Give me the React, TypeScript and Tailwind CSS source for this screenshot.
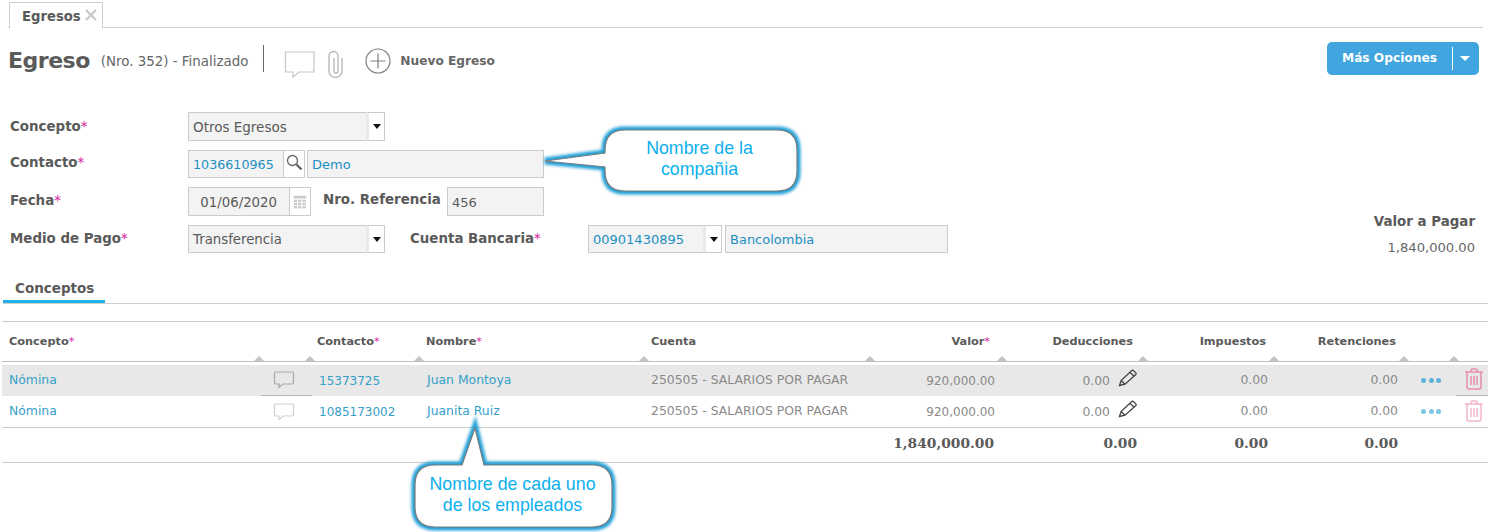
import React from "react";

const FONT = "font-['DejaVu_Sans',sans-serif]";
const GRID = "grid grid-cols-[259px_51px_109px_225px_226px_132px_141px_131px_130px_50px_32px]";

function Star() {
  return <span className="text-[#d6249f] font-normal">*</span>;
}

function Bubble({ className, width, height, path, lines, textClass }: { className: string; width: number; height: number; path: string; lines: string[]; textClass: string }) {
  return (
    <div className={`absolute ${className}`} style={{ width, height }}>
      <svg width={width} height={height} className="absolute left-0 top-0 overflow-visible">
        <path d={path} fill="none" stroke="#1f9fd6" strokeWidth="7" className="blur-[1.5px]" />
        <path d={path} fill="#fff" stroke="#7c7c7c" strokeWidth="1.2" />
      </svg>
      <div className={`absolute font-['Liberation_Sans',sans-serif] text-[#0cb0ee] text-[17.8px] leading-[21px] text-center ${textClass}`}>
        {lines.map((l) => (
          <div key={l}>{l}</div>
        ))}
      </div>
    </div>
  );
}

function Field({ className, children }: { className: string; children?: React.ReactNode }) {
  return (
    <div className={`border border-[#cbcbcb] bg-[#f3f3f3] flex items-center px-1 pt-[2px] ${className}`}>{children}</div>
  );
}

function Caret() {
  return (
    <div className="bg-white border border-[#cbcbcb] border-l-[3px] border-l-[#e9e9e9] flex items-center justify-center h-full w-[19px] shrink-0">
      <div className="w-0 h-0 border-x-[4px] border-x-transparent border-t-[5px] border-t-[#111]" />
    </div>
  );
}

function Comment({ dark }: { dark?: boolean }) {
  return (
    <svg width="22" height="18" viewBox="0 0 22 18" fill="none" stroke={dark ? "#a9a9a9" : "#cfcfcf"} strokeWidth="1.2">
      <path d="M3 1h16a1.5 1.5 0 0 1 1.5 1.5v9A1.5 1.5 0 0 1 19 13h-9l-4 3.5V13H3a1.5 1.5 0 0 1-1.5-1.5v-9A1.5 1.5 0 0 1 3 1z" />
    </svg>
  );
}

function Pencil() {
  return (
    <svg width="20" height="18" viewBox="0 0 20 18" fill="none" stroke="#444" strokeWidth="1.3" className="ml-[8px] -mt-[5px]">
      <path d="M1.5 16.5l1.6-5L13.5 1.8a1.5 1.5 0 0 1 2.1 0l2 1.8a1.5 1.5 0 0 1 0 2.1L7 15.2z" />
      <path d="M3.1 11.5L7 15.2M12 3.4l4 3.6" />
    </svg>
  );
}

function Trash({ dark }: { dark?: boolean }) {
  const c = dark ? "#e58fa6" : "#f5b5c6";
  return (
    <svg width="20" height="22" viewBox="0 0 20 22" fill="none" stroke={c} strokeWidth="1.5">
      <path d="M1 4h18M7 4V2a1 1 0 0 1 1-1h4a1 1 0 0 1 1 1v2" />
      <path d="M3 4v15a2 2 0 0 0 2 2h10a2 2 0 0 0 2-2V4" />
      <path d="M7 8v9M10 8v9M13 8v9" />
    </svg>
  );
}

function Dots({ dark }: { dark?: boolean }) {
  const c = dark ? "bg-[#5db3d8]" : "bg-[#7cc5e3]";
  return (
    <div className="flex gap-[2.5px] ml-[15px]">
      <span className={`w-[5px] h-[5px] rounded-full ${c}`} />
      <span className={`w-[5px] h-[5px] rounded-full ${c}`} />
      <span className={`w-[5px] h-[5px] rounded-full ${c}`} />
    </div>
  );
}

function HeadCell({ children, className = "" }: { children?: React.ReactNode; className?: string }) {
  return (
    <div className={`relative flex items-center h-full pt-[2px] font-bold text-[11.3px] text-[#5a5a5a] ${className}`}>
      {children}
      <span className="absolute right-[-3px] bottom-0 w-0 h-0 border-x-[5px] border-x-transparent border-b-[5px] border-b-[#c4c4c4]" />
    </div>
  );
}

function DataRow({ contact, name, shaded }: { contact: string; name: string; shaded?: boolean }) {
  const muted = "text-[#8a8a8a]";
  return (
    <div className={`${GRID} h-[31px] items-center text-[12.4px] ${shaded ? "bg-[#e8e8e8]" : ""}`}>
      <div className="pl-[7px] text-[#35a0c9]">Nómina</div>
      <div className={`flex justify-start items-center h-full pl-[12px] ${shaded ? "border-b border-[#b5b5b5]" : ""}`}>
        <Comment dark={shaded} />
      </div>
      <div className="pl-[7px] text-[12px] text-[#35a0c9]">{contact}</div>
      <div className="pl-[6px] text-[#35a0c9]">{name}</div>
      <div className={`pl-[5px] ${muted}`}>250505 - SALARIOS POR PAGAR</div>
      <div className={`text-right pr-[9px] text-[12px] ${muted}`}>920,000.00</div>
      <div className={`flex justify-end items-center pr-[7px] ${muted}`}>
        <span className="mt-[2px]">0.00</span>
        <Pencil />
      </div>
      <div className={`text-right pr-[8px] ${muted}`}>0.00</div>
      <div className={`text-right pr-[8px] ${muted}`}>0.00</div>
      <div className="flex items-center"><Dots dark={shaded} /></div>
      <div className={`flex items-center justify-center h-full pl-[4px] pb-[2px] ${shaded ? "border-b border-[#b5b5b5]" : ""}`}>
        <Trash dark={shaded} />
      </div>
    </div>
  );
}

export default function App() {
  const label = "font-bold text-[13.4px] text-[#5a5a5a]";
  const link = "text-[#1b8fc2]";
  return (
    <div className={`relative w-[1497px] h-[532px] overflow-hidden bg-white text-[#5a5a5a] ${FONT}`}>
      {/* tab strip */}
      <div className="ml-[8px] mr-[14px] h-[28px] border-b border-[#cfcfcf] flex items-end">
        <div className="ml-px h-[26px] w-[94px] border border-b-0 border-[#cfcfcf] bg-white flex items-center pl-[12px] pt-[2px] gap-[4px] -mb-px">
          <span className="font-bold text-[13.2px] text-[#5a5a5a]">Egresos</span>
          <svg width="12" height="12" viewBox="0 0 12 12" stroke="#cacaca" strokeWidth="2.4" className="-mt-[3px]">
            <path d="M1 1l10 10M11 1L1 11" />
          </svg>
        </div>
      </div>

      {/* title row */}
      <div className="h-[66px] pl-[8px] pr-[18px] flex items-center">
        <div className="font-bold text-[22px] text-[#5a5a5a] leading-none tracking-[-0.5px]">Egreso</div>
        <div className="ml-[11px] mt-[2px] text-[13.4px] text-[#666]">(Nro. 352) - Finalizado</div>
        <div className="ml-[15px] w-px h-[27px] bg-[#666] -mt-[6px]" />
        <svg width="32" height="28" viewBox="0 0 32 28" fill="none" stroke="#c6c6c6" strokeWidth="1.2" className="ml-[20px] mt-[6px]">
          <path d="M1.5 2h28.5v20H15l-6 5v-5H1.5z" />
        </svg>
        <svg width="18" height="28" viewBox="0 0 18 28" fill="none" stroke="#b5b5b5" strokeWidth="1.3" className="ml-[11px] mt-[6px]">
          <path d="M15 8v13a6.5 6.5 0 0 1-13 0V6a4.5 4.5 0 0 1 9 0v15a2 2 0 0 1-4 0V8" />
        </svg>
        <svg width="26" height="26" viewBox="0 0 26 26" fill="none" stroke="#808080" strokeWidth="1.2" className="ml-[20px]">
          <circle cx="13" cy="13" r="12" />
          <path d="M13 5.5v15M5.5 13h15" />
        </svg>
        <div className="ml-[9px] font-bold text-[12.2px] text-[#666]">Nuevo Egreso</div>
        <div className="ml-auto w-[152px] h-[33px] -mt-[6px] rounded-[5px] bg-[#41a6e0] flex items-center text-white font-bold text-[12.2px]">
          <span className="pl-[15px] w-[125px]">Más Opciones</span>
          <span className="w-px h-[23px] bg-white" />
          <span className="ml-[7px] w-0 h-0 border-x-[5px] border-x-transparent border-t-[5px] border-t-white" />
        </div>
      </div>

      {/* form */}
      <div className="mt-[18px] pl-[10px] pr-[22px] flex items-end justify-between">
        <div className="flex flex-col">
          <div className="flex items-center h-[29px]">
            <div className={`w-[178px] ${label} mt-[2px]`}>Concepto<Star /></div>
            <div className="flex h-[29px] w-[197px]">
              <Field className="flex-1 border-r-0 text-[13.5px]">Otros Egresos</Field>
              <Caret />
            </div>
          </div>
          <div className="flex items-center h-[28px] mt-[9px]">
            <div className={`w-[178px] ${label} -mt-[1px]`}>Contacto<Star /></div>
            <div className="flex h-[28px]">
              <Field className={`w-[95px] border-r-0 text-[12.7px] ${link}`}>1036610965</Field>
              <div className="w-[22px] border border-[#cbcbcb] bg-white flex justify-center pt-[3px]">
                <svg width="17" height="17" viewBox="0 0 17 17" fill="none" stroke="#666" strokeWidth="1.3">
                  <circle cx="6.5" cy="6.5" r="5" />
                  <path d="M10.5 10.5l5 5" strokeWidth="2.4" />
                </svg>
              </div>
              <Field className={`ml-[2px] w-[237px] text-[13px] ${link}`}>Demo</Field>
            </div>
          </div>
          <div className="flex items-center h-[29px] mt-[9px]">
            <div className={`w-[178px] ${label} -mt-[1px]`}>Fecha<Star /></div>
            <div className="flex h-[29px]">
              <Field className="w-[101px] border-r-0 justify-end pr-[12px] text-[13.3px]">01/06/2020</Field>
              <div className="w-[22px] border border-[#cbcbcb] bg-white flex items-center justify-center">
                <svg width="14" height="14" viewBox="0 0 13 13" fill="#c9c9c9" stroke="#fff" strokeWidth="0.5">
                  <rect x="0.5" y="0.5" width="12" height="3" />
                  <rect x="0.5" y="4" width="3.6" height="2.6" /><rect x="4.5" y="4" width="3.6" height="2.6" /><rect x="8.5" y="4" width="3.6" height="2.6" />
                  <rect x="0.5" y="7" width="3.6" height="2.6" /><rect x="4.5" y="7" width="3.6" height="2.6" /><rect x="8.5" y="7" width="3.6" height="2.6" />
                  <rect x="0.5" y="10" width="3.6" height="2.6" /><rect x="4.5" y="10" width="3.6" height="2.6" /><rect x="8.5" y="10" width="3.6" height="2.6" />
                </svg>
              </div>
              <div className={`ml-[12px] w-[124px] ${label} flex items-center pb-[2px]`}>Nro. Referencia</div>
              <Field className="w-[97px] text-[13px]">456</Field>
            </div>
          </div>
          <div className="flex items-center h-[28px] mt-[9px]">
            <div className={`w-[178px] ${label}`}>Medio de Pago<Star /></div>
            <div className="flex h-[28px] w-[197px]">
              <Field className="flex-1 border-r-0 text-[13.3px]">Transferencia</Field>
              <Caret />
            </div>
            <div className={`ml-[25px] w-[178px] ${label}`}>Cuenta Bancaria<Star /></div>
            <div className="flex h-[28px]">
              <Field className={`w-[115px] border-r-0 text-[13px] ${link}`}>00901430895</Field>
              <Caret />
              <Field className={`ml-[3px] w-[223px] text-[13px] ${link}`}>Bancolombia</Field>
            </div>
          </div>
        </div>
        <div className="text-right mb-[-5px]">
          <div className="font-bold text-[13.4px] text-[#5a5a5a]">Valor a Pagar</div>
          <div className="mt-[6px] text-[13.1px] text-[#666]">1,840,000.00</div>
        </div>
      </div>

      {/* tabs */}
      <div className="mt-[24px] h-[27px] ml-[3px] w-[1485px] border-b border-[#cfcfcf]">
        <div className="w-[102px] h-[26px] border-b-[3px] border-[#1fb0e6] pl-[12px] font-bold text-[13.5px] text-[#5a5a5a] leading-[23px]">Conceptos</div>
      </div>

      {/* table */}
      <div className="mt-[17px] ml-[2px] w-[1486px] border-t border-[#c8c8c8]">
        <div className={`${GRID} h-[40px] border-b border-[#c0c0c0]`}>
          <HeadCell className="pl-[7px]">Concepto<Star /></HeadCell>
          <HeadCell />
          <HeadCell className="pl-[5px]">Contacto<Star /></HeadCell>
          <HeadCell className="pl-[5px]">Nombre<Star /></HeadCell>
          <HeadCell className="pl-[5px]">Cuenta</HeadCell>
          <HeadCell className="justify-end pr-[14px]">Valor<Star /></HeadCell>
          <HeadCell className="justify-end pr-[12px]">Deducciones</HeadCell>
          <HeadCell className="justify-end pr-[10px]">Impuestos</HeadCell>
          <HeadCell className="justify-end pr-[10px]">Retenciones</HeadCell>
          <HeadCell />
          <div />
        </div>
        <div className="pt-[3px]">
          <DataRow contact="15373725" name="Juan Montoya" shaded />
          <DataRow contact="1085173002" name="Juanita Ruiz" />
        </div>
        <div className={`${GRID} h-[36px] border-y border-[#cdcdcd] items-center font-['DejaVu_Serif',serif] font-bold text-[13.8px] text-[#5a5a5a] pb-[3px]`}>
          <div className="col-span-5" />
          <div className="text-right pr-[10px]">1,840,000.00</div>
          <div className="text-right pr-[8px]">0.00</div>
          <div className="text-right pr-[8px]">0.00</div>
          <div className="text-right pr-[8px]">0.00</div>
        </div>
      </div>

      {/* callouts */}
      <Bubble
        className="left-[540px] top-[125px]"
        width={260}
        height={70}
        path="M85 5 Q65 5 65 25 V28 L5 36 L65 42 V46 Q65 66 85 66 H237 Q257 66 257 46 V25 Q257 5 237 5 Z"
        lines={["Nombre de la", "compañia"]}
        textClass="left-[65px] w-[189px] top-[13px]"
      />
      <Bubble
        className="left-[410px] top-[425px]"
        width={206}
        height={107}
        path="M65 3 L52 40 H25 Q5 40 5 60 V82 Q5 102 25 102 H182 Q202 102 202 82 V60 Q202 40 182 40 H74 Z"
        lines={["Nombre de cada uno", "de los empleados"]}
        textClass="left-[5px] w-[195px] top-[49px]"
      />
    </div>
  );
}
